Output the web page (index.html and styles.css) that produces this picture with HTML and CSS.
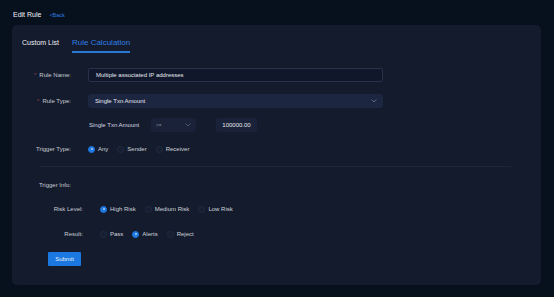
FILE: index.html
```html
<!DOCTYPE html>
<html lang="en">
<head>
  <meta charset="UTF-8" />
  <title>Edit Rule</title>
  <link rel="stylesheet" href="styles.css">
</head>
<body>
  <div class="topbar">
    <span class="page-title">Edit Rule</span>
    <a class="back">&lt;Back</a>
  </div>

  <div class="card">
    <div class="tabs">
      <div class="tab">Custom List</div>
      <div class="tab active">Rule Calculation</div>
    </div>

    <form class="rule-form">
      <!-- Rule Name -->
      <div class="row row-name">
        <label class="lbl"><span class="req">*</span>Rule Name:</label>
        <div class="field wide">Multiple associated IP addresses</div>
      </div>

      <!-- Rule Type -->
      <div class="row row-type">
        <label class="lbl"><span class="req">*</span>Rule Type:</label>
        <div class="select wide">
          <span>Single Txn Amount</span>
          <svg class="arrow" width="6" height="4" viewBox="0 0 6 4"><polyline points="0.5,0.5 3,3 5.5,0.5" fill="none" stroke="#5d6780" stroke-width="1"/></svg>
        </div>
      </div>

      <!-- Single Txn Amount -->
      <div class="row row-amount">
        <span class="lbl"></span>
        <span class="sub-text">Single Txn Amount</span>
        <div class="select small">
          <span>&gt;=</span>
          <svg class="arrow" width="6" height="4" viewBox="0 0 6 4"><polyline points="0.5,0.5 3,3 5.5,0.5" fill="none" stroke="#4b5570" stroke-width="1"/></svg>
        </div>
        <div class="field amount">100000.00</div>
      </div>

      <!-- Trigger Type -->
      <div class="row row-trigger">
        <label class="lbl">Trigger Type:</label>
        <div class="radios">
          <span class="radio checked"><i></i>Any</span>
          <span class="radio"><i></i>Sender</span>
          <span class="radio"><i></i>Receiver</span>
        </div>
      </div>

      <div class="divider"></div>

      <div class="row row-info">
        <label class="lbl">Trigger Info:</label>
      </div>

      <div class="row row-risk nested">
        <label class="lbl">Risk Level:</label>
        <div class="radios">
          <span class="radio checked"><i></i>High Risk</span>
          <span class="radio"><i></i>Medium Risk</span>
          <span class="radio"><i></i>Low Risk</span>
        </div>
      </div>

      <div class="row row-result nested">
        <label class="lbl">Result:</label>
        <div class="radios">
          <span class="radio"><i></i>Pass</span>
          <span class="radio checked"><i></i>Alerts</span>
          <span class="radio"><i></i>Reject</span>
        </div>
      </div>

      <button type="button" class="submit">Submit</button>
    </form>
  </div>
</body>
</html>
```

FILE: styles.css
```css
* {
  box-sizing: border-box;
  margin: 0;
  padding: 0;
}

html, body {
  height: 100%;
}

body {
  background-color: #07101d;
  font-family: "Liberation Sans", Arial, sans-serif;
  color: #d3d6dd;
  font-size: 6px;
}

/* barre du haut */
.topbar {
  height: 25px;
  padding: 5px 0 0 13px;
  line-height: 8px;
  display: flex;
  align-items: center;
  align-self: flex-start;
}

.page-title {
  font-size: 7px;
  color: #f2f4f8;
}

.back {
  font-size: 5.5px;
  color: #2a7de1;
  margin-left: 8px;
}

/* carte principale */
.card {
  margin-left: 12px;
  width: 529px;
  background-color: #141b2d;
  border-radius: 5px;
  padding: 0 10px 19px;
}

.tabs {
  display: flex;
  gap: 13px;
  padding-top: 13px;
}

.tab {
  font-size: 7px;
  line-height: 10px;
  color: #eef0f4;
  padding-bottom: 3px;
  border-bottom: 2px solid transparent;
}

.tab.active {
  font-size: 8px;
  color: #2f7fe4;
  border-bottom-color: #2a78d8;
}

.rule-form {
  margin-top: 15px;
  display: flex;
  flex-direction: column;
}

.row {
  display: flex;
  align-items: center;
  height: 14px;
}

.lbl {
  width: 49px;
  flex-shrink: 0;
  text-align: right;
  color: #c9ccd3;
  margin-right: 17px;
}

.nested .lbl {
  width: 61px;
}

.req {
  color: #8a3a45;
  margin-right: 3px;
}

.row-name { margin-bottom: 12px; }
.row-type { margin-bottom: 10px; }
.row-amount { margin-bottom: 10px; }
.row-info { margin-bottom: 10px; }
.row-risk { margin-bottom: 11px; }
.row-result { margin-bottom: 11px; }

.field {
  height: 14px;
  display: flex;
  align-items: center;
  color: #e6e8ee;
  border-radius: 2px;
}

.field.wide {
  width: 295px;
  padding-left: 7px;
  background-color: #10172a;
  border: 1px solid #29324a;
}

.select {
  height: 14px;
  display: flex;
  align-items: center;
  justify-content: space-between;
  border-radius: 3px;
  color: #e6e8ee;
}

.select.wide {
  width: 295px;
  padding: 0 6px 0 7px;
  background-color: #1d2640;
}

.sub-text {
  margin-left: 1px;
  width: 62px;
  color: #d6d9e0;
}

.select.small {
  width: 45px;
  padding: 0 5px 0 5px;
  background-color: #1a2239;
  font-size: 4.5px;
  color: #8b93a8;
}

.field.amount {
  margin-left: 20px;
  width: 41px;
  justify-content: center;
  background-color: #1a2239;
}

.radios {
  display: flex;
  align-items: center;
  gap: 9px;
}

.radio {
  display: flex;
  align-items: center;
  color: #cfd2d9;
}

.radio i {
  width: 7px;
  height: 7px;
  border-radius: 50%;
  margin-right: 3px;
  background-color: #161e32;
  border: 1px solid #222b41;
  display: flex;
  align-items: center;
  justify-content: center;
}

.radio.checked i {
  background-color: #1e79e0;
  border-color: #1e79e0;
}

.radio.checked i::after {
  content: '';
  width: 2px;
  height: 2px;
  border-radius: 50%;
  background-color: #a8ccf6;
}

.divider {
  margin: 10px 20px 11px 18px;
  height: 1px;
  background-color: rgba(255, 255, 255, 0.05);
}

.submit {
  margin-left: 26px;
  width: 33px;
  height: 14px;
  border: none;
  border-radius: 1px;
  background-color: #1a78e0;
  color: #e8f1fc;
  font-family: "Liberation Sans", Arial, sans-serif;
  font-size: 6px;
}
```
